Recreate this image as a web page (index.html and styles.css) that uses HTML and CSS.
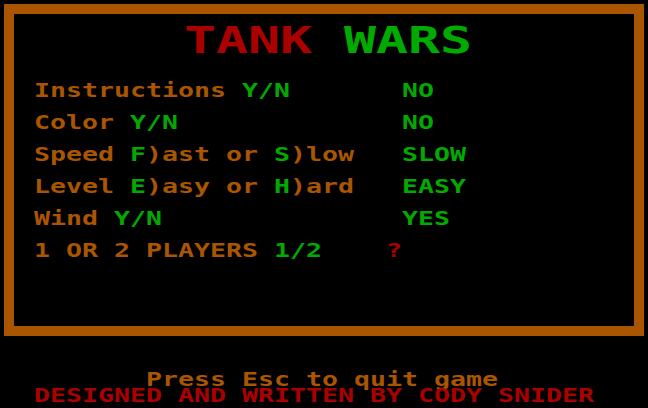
FILE: index.html
```html
<!DOCTYPE html>
<html>
<head>
<meta charset="utf-8">
<link rel="stylesheet" href="styles.css">
<title>Tank Wars</title>
</head>
<body>
<div class="screen">
  <div class="frame">
    <div class="title"><span class="title-text"><span class="red">TANK</span> <span class="green">WARS</span></span></div>
    <div class="menu">
      <div class="row"><span class="label">Instructions <span class="green">Y/N</span></span><span class="value">NO</span></div>
      <div class="row"><span class="label">Color <span class="green">Y/N</span></span><span class="value">NO</span></div>
      <div class="row"><span class="label">Speed <span class="green">F</span>)ast or <span class="green">S</span>)low</span><span class="value">SLOW</span></div>
      <div class="row"><span class="label">Level <span class="green">E</span>)asy or <span class="green">H</span>)ard</span><span class="value">EASY</span></div>
      <div class="row"><span class="label">Wind <span class="green">Y/N</span></span><span class="value">YES</span></div>
      <div class="row"><span class="label">1 OR 2 PLAYERS <span class="green">1/2</span></span><span class="value prompt">?</span></div>
    </div>
  </div>
  <div class="footer">
    <div class="line press">Press Esc to quit game</div>
    <div class="line credit">DESIGNED AND WRITTEN BY CODY SNIDER</div>
  </div>
</div>
</body>
</html>
```

FILE: styles.css
```css
html, body {
  margin: 0;
  padding: 0;
  background: #000;
}
body {
  width: 648px;
  height: 408px;
  overflow: hidden;
  font-family: "DejaVu Sans Mono", "Liberation Mono", monospace;
  font-weight: bold;
  color: #aa5500;
}
.screen {
  padding: 4px;
}
.frame {
  box-sizing: border-box;
  width: 640px;
  height: 332px;
  border: 10px solid #aa5500;
  padding-top: 6px;
}
.red { color: #aa0000; }
.green { color: #00aa00; }

.title {
  display: flex;
  justify-content: center;
  height: 41px;
  padding-left: 8px;
}
.title-text {
  display: block;
  font-size: 38px;
  line-height: 41px;
  white-space: pre;
  transform: scaleX(1.3986);
}
.menu {
  margin-top: 13px;
  padding-left: 20px;
}
.row {
  display: grid;
  grid-template-columns: 23ch auto;
  width: 28ch;
  font-size: 19px;
  line-height: 32px;
  height: 32px;
  white-space: pre;
  transform: scaleX(1.3986);
  transform-origin: left center;
}
.value { color: #00aa00; }
.prompt {
  color: #aa0000;
  margin-left: -1ch;
}
.footer {
  margin-top: 35px;
  padding-left: 30px;
}
.line {
  width: max-content;
  font-size: 19px;
  line-height: 16px;
  height: 16px;
  white-space: pre;
  transform: scaleX(1.3986);
  transform-origin: left center;
}
.press {
  padding-left: 7ch;
  color: #aa5500;
}
.credit {
  color: #aa0000;
}
```
